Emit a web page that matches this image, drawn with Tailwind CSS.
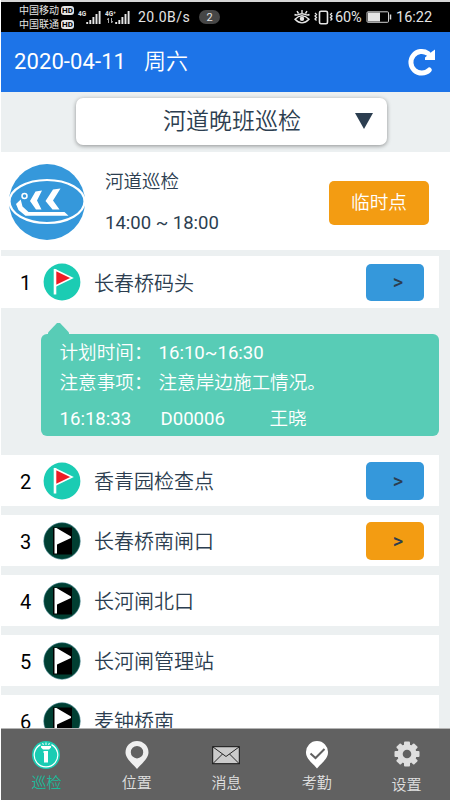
<!DOCTYPE html>
<html lang="zh-CN">
<head>
<meta charset="utf-8">
<title>河道巡检</title>
<script src="https://cdn.jsdelivr.net/npm/@tailwindcss/browser@4"></script>
</head>
<body class="w-[450px] h-[800px] overflow-hidden bg-white font-[Roboto,'Noto_Sans_CJK_SC',sans-serif] font-[350] text-[#2c3e50] whitespace-nowrap">
<svg class="hidden">
  <symbol id="flag-done" viewBox="0 0 38 38">
    <circle cx="19" cy="19" r="18.4" fill="#1bccb3"/>
    <path d="M12 6V31.500" stroke="#fff" stroke-width="2.600"/>
    <path d="M12.500 7L29 15L12.500 23Z" fill="#ee1c25" stroke="#fff" stroke-width="1.600"/>
  </symbol>
  <symbol id="flag-todo" viewBox="0 0 38 38">
    <circle cx="19" cy="19" r="18.2" fill="#003f32" stroke="#2c7480" stroke-width=".6"/>
    <rect x="10" y="5.500" width="19" height="27" fill="#000"/>
    <path d="M11.500 6H13.500L28 14.500L28 16L14 22.500V31.500H11.500Z" fill="#fff"/>
  </symbol>
  <symbol id="signal" viewBox="0 0 15 13">
    <path d="M1.200 13V11M4.300 13V9M7.400 13V6M10.500 13V3M13.600 13V0" stroke="#e6e6e6" stroke-width="1.900"/>
  </symbol>
</svg>
<div class="h-full pl-px flex flex-col">
  <div class="h-[2px] shrink-0 bg-[#d6d6d6]"></div>

  <div class="h-[30px] shrink-0 bg-black text-[#e4e4e4] flex items-center font-normal">
    <div class="ml-[18px] w-[56px] flex flex-col text-[10px] leading-[14px] pt-px">
      <div class="flex items-center gap-[2px]"><span>中国移动</span><span class="bg-[#e4e4e4] text-black font-bold text-[8px] leading-[9px] w-[13px] rounded-[3px] text-center">HD</span></div>
      <div class="flex items-center gap-[2px]"><span>中国联通</span><span class="bg-[#e4e4e4] text-black font-bold text-[8px] leading-[9px] w-[13px] rounded-[3px] text-center">HD</span></div>
    </div>
    <div class="ml-[3px] w-[23px] h-[15px] flex items-start"><span class="text-[6.500px] leading-[8px] font-bold w-[8px]">4G</span><svg class="w-[15px] h-[13px] mt-px"><use href="#signal"/></svg></div>
    <div class="ml-[4px] w-[25px] h-[15px] flex items-start"><span class="text-[6.500px] leading-[8px] font-bold w-[10px] flex flex-col"><span>4G⁺</span><svg class="w-[6px] h-[5px] ml-[2px]" viewBox="0 0 6 5"><path d="M1.500 5V0M0 2L1.500 0M4.500 0V5M6 3L4.500 5" stroke="#aaa" fill="none"/></svg></span><svg class="w-[15px] h-[13px] mt-px"><use href="#signal"/></svg></div>
    <span class="ml-[8px] w-[61px] text-[14px] tracking-[0.45px] pt-px">20.0B/s</span>
    <span class="w-[21px] h-[14px] rounded-full bg-[#464646] text-[11px] leading-[15px] text-center">2</span>
    <svg class="ml-[74px] w-[16px] h-[14px]" viewBox="0 0 16 14" fill="none" stroke="#e6e6e6" stroke-width="1.400"><path d="M.5 4.500C2.500 5.500 3.500 5 5 4.300Q8 3.200 11 4.300C12.500 5 13.500 5.500 15.500 4.500M8 3.500V0M4.500 3.500L3 1.200M11.500 3.500L13 1.200M1 9.200Q8 2.500 15 9.200Q8 16.500 1 9.200Z"/><circle cx="8" cy="8.800" r="2.200" fill="#e6e6e6" stroke="none"/></svg>
    <svg class="ml-[4px] w-[19px] h-[15px]" viewBox="0 0 19 15" fill="none" stroke="#e6e6e6" stroke-width="1.300"><rect x="5.500" y="1.200" width="8" height="12.500" rx="1.500" stroke-width="1.600"/><path d="M1 3L2.500 4.500L1 6L2.500 7.500L1 9L2.500 10.500M18 3L16.500 4.500L18 6L16.500 7.500L18 9L16.500 10.500"/></svg>
    <span class="ml-[2px] w-[31px] text-[14.500px] pt-px tracking-[-0.1px]">60%</span>
    <svg class="w-[26px] h-[12px]" viewBox="0 0 26 12"><rect x="1" y=".8" width="21.500" height="10.500" rx="1" fill="none" stroke="#cfcfcf" stroke-width="1"/><rect x="2" y="1.500" width="12" height="9" fill="#e4e4e4"/><path d="M24.500 3.500V8.500" stroke="#dcdcdc" stroke-width="1.500"/></svg>
    <span class="ml-[4px] text-[14.500px] pt-px">16:22</span>
  </div>

  <header class="h-[60px] shrink-0 bg-[#1d74e8] text-white flex items-center pl-[13px] pr-[14px] text-[22px] font-normal">
    <span class="w-[130px] tracking-[0.1px] -mt-[2px]">2020-04-11</span><span class="font-[350] -mt-[2px]">周六</span>
    <svg class="ml-auto w-[29px] h-[29px] -mt-[2px]" viewBox="0 0 29 29"><path d="M22.300 23A10.800 10.800 0 1 1 21 6.500" fill="none" stroke="#fff" stroke-width="5" stroke-linecap="round"/><path d="M28 2.500V13H18V10.500L24.500 5Z" fill="#fff"/></svg>
  </header>

  <main class="flex-1 min-h-0 overflow-hidden bg-[#ecf0f1] flex flex-col">
    <div class="h-[60px] shrink-0 pt-[6px] pl-[75px]">
      <div class="w-[311px] h-[47px] bg-white rounded-[7px] shadow-[0_1px_4px_rgba(0,0,0,0.4)] flex items-center pl-[87px] pr-[14px] text-[23px]">
        <span class="pt-[2px]">河道晚班巡检</span>
        <svg class="ml-auto w-[18px] h-[16px] -mt-[2px]" viewBox="0 0 18 16"><path d="M0 0H18L9 16Z" fill="#2c3e50"/></svg>
      </div>
    </div>

    <section class="h-[98px] shrink-0 bg-white flex items-center pl-[7px] pr-[21px]">
      <svg class="w-[78px] h-[78px] mt-[2px]" viewBox="0 0 78 78">
        <circle cx="39" cy="39" r="38" fill="#3598db"/>
        <ellipse cx="39" cy="38.500" rx="37.500" ry="21.500" fill="none" stroke="#fff" stroke-width="2.200"/>
        <circle cx="16.500" cy="33" r="2.500" fill="none" stroke="#fff" stroke-width="1.500"/>
        <path d="M12.700 36.500L8 41L10.500 47L17.500 52.700H60.500L56.500 49H20.500L14.500 43.500Z" fill="#fff"/>
        <path d="M27.500 28.500L34 27.500L29 37.500L33.500 46.500H28L22 38Z M45 26.500L52.500 25.500L45 37.500L51.500 46.500H44.500L37.500 38Z" fill="#fff"/>
      </svg>
      <div class="ml-[19px] mt-[3px] flex flex-col text-[18.500px] leading-[41px]"><span>河道巡检</span><span class="font-normal">14:00 ~ 18:00</span></div>
      <button class="ml-auto w-[100px] h-[44px] mt-[4px] rounded-[5px] bg-[#f39c12] text-white text-[18.700px] font-[350]">临时点</button>
    </section>

    <div class="mt-[6px] mr-[11px] h-[52px] shrink-0 bg-white flex items-center pl-[19px] pr-[15px] text-[20px]">
      <span class="w-[23px] pt-[2px] font-normal text-black">1</span><svg class="w-[38px] h-[38px]"><use href="#flag-done"/></svg><span class="ml-[13px] pt-[3px]">长春桥码头</span>
      <button class="ml-auto w-[58px] h-[37px] rounded-[5px] bg-[#3598db] font-medium pl-[6px]">&gt;</button>
    </div>

    <div class="mt-[15px] ml-[40px] mr-[11px] shrink-0">
      <svg class="block ml-[7px] w-[21px] h-[11px]" viewBox="0 0 21 11"><path d="M0 11V9.500L9 0H12L21 9.500V11Z" fill="#58ccb6"/></svg>
      <div class="h-[102px] rounded-[6px] bg-[#58ccb6] text-white text-[18.600px] leading-[30px] pl-[18.500px] pt-[4px]">
        <div class="flex"><span class="w-[99px]">计划时间：</span><span class="font-normal">16:10~16:30</span></div>
        <div class="flex"><span class="w-[99px]">注意事项：</span><span>注意岸边施工情况。</span></div>
        <div class="flex mt-[6px]"><span class="w-[101px] font-normal">16:18:33</span><span class="w-[109px] font-normal">D00006</span><span>王晓</span></div>
      </div>
    </div>

    <div class="mt-[19px] mr-[11px] flex flex-col gap-[9px] text-[20px]">
      <div class="h-[51px] shrink-0 bg-white flex items-center pl-[19px] pr-[15px]">
        <span class="w-[23px] pt-[2px] font-normal text-black">2</span><svg class="w-[38px] h-[38px]"><use href="#flag-done"/></svg><span class="ml-[13px] pt-[3px]">香青园检查点</span>
        <button class="ml-auto w-[58px] h-[38px] rounded-[5px] bg-[#3598db] font-medium pl-[6px]">&gt;</button>
      </div>
      <div class="h-[51px] shrink-0 bg-white flex items-center pl-[19px] pr-[15px]">
        <span class="w-[23px] pt-[2px] font-normal text-black">3</span><svg class="w-[38px] h-[38px]"><use href="#flag-todo"/></svg><span class="ml-[13px] pt-[3px]">长春桥南闸口</span>
        <button class="ml-auto w-[58px] h-[38px] rounded-[5px] bg-[#f39c12] font-medium pl-[6px]">&gt;</button>
      </div>
      <div class="h-[51px] shrink-0 bg-white flex items-center pl-[19px]">
        <span class="w-[23px] pt-[2px] font-normal text-black">4</span><svg class="w-[38px] h-[38px]"><use href="#flag-todo"/></svg><span class="ml-[13px] pt-[3px]">长河闸北口</span>
      </div>
      <div class="h-[51px] shrink-0 bg-white flex items-center pl-[19px]">
        <span class="w-[23px] pt-[2px] font-normal text-black">5</span><svg class="w-[38px] h-[38px]"><use href="#flag-todo"/></svg><span class="ml-[13px] pt-[3px]">长河闸管理站</span>
      </div>
      <div class="h-[51px] shrink-0 bg-white flex items-center pl-[19px]">
        <span class="w-[23px] pt-[2px] font-normal text-black">6</span><svg class="w-[38px] h-[38px]"><use href="#flag-todo"/></svg><span class="ml-[13px] pt-[3px]">麦钟桥南</span>
      </div>
    </div>
  </main>

  <nav class="h-[72px] shrink-0 bg-[#616161] border-t border-[#b4b4b4] grid grid-cols-5 text-[15px] leading-[20px] text-[#e0e0e0]">
    <div class="flex flex-col items-center gap-[4px] pt-[12px] pl-px text-[#1abc9c]">
      <svg class="w-[28px] h-[28px]" viewBox="0 0 28 28"><circle cx="14" cy="14" r="14" fill="#1bccb3"/><path d="M8.500 3.600A11.800 11.800 0 1 0 19.500 3.600" fill="none" stroke="#fff" stroke-width="1.200"/><path d="M9 5H19V6.500L17 8.500H11L9 6.500Z M11.500 10H16V21.500H12V12H11.500Z M13.500 1.500H14.500V4H13.500Z M10 2.500L11 2L12 3.500L11 4Z M18 2.500L17 2L16 3.500L17 4Z" fill="#fff"/></svg>
      <span>巡检</span>
    </div>
    <div class="flex flex-col items-center gap-[4px] pt-[12px] pl-[2px]">
      <svg class="w-[24px] h-[28px]" viewBox="0 0 24 28"><path fill-rule="evenodd" d="M12 0A11.500 11.500 0 0 1 23.500 11.500C23.500 18 15 24 12 28C9 24 .5 18 .5 11.500A11.500 11.500 0 0 1 12 0ZM12 5A6.200 6.200 0 1 0 12 17.400A6.200 6.200 0 1 0 12 5Z" fill="#efefef"/></svg>
      <span>位置</span>
    </div>
    <div class="flex flex-col items-center gap-[4px] pt-[12px] pl-[2px]">
      <svg class="w-[28px] h-[28px]" viewBox="0 0 28 28"><rect x=".7" y="5.700" width="26.600" height="17" fill="#cbcbcb" stroke="#151515" stroke-width="1"/><path d="M1 6L14 15.500L27 6M1 22.500L10.500 13M27 22.500L17.500 13" fill="none" stroke="#151515" stroke-width=".9"/></svg>
      <span>消息</span>
    </div>
    <div class="flex flex-col items-center gap-[4px] pt-[12px] pl-[3px]">
      <svg class="w-[24px] h-[28px]" viewBox="0 0 24 28"><path d="M12 0A11 11 0 0 1 23 11.500C23 18 15.500 23 12 27.500C8.500 23 1 18 1 11.500A11 11 0 0 1 12 0Z" fill="#fff"/><path d="M5.500 12.500L10.500 17L19.500 8" fill="none" stroke="#616161" stroke-width="2"/></svg>
      <span>考勤</span>
    </div>
    <div class="flex flex-col items-center gap-[4px] pt-[12px] pl-[3px]">
      <svg class="w-[26px] h-[26px] mb-[4px]" viewBox="-13 -13 26 26"><g fill="#dedede"><g id="teeth"><rect x="-3" y="-12.500" width="6" height="25" rx="1"/><rect x="-12.500" y="-3" width="25" height="6" rx="1"/></g><use href="#teeth" transform="rotate(45)"/><circle r="9.700"/></g><circle r="4.300" fill="#616161"/></svg>
      <span>设置</span>
    </div>
  </nav>
</div>
</body>
</html>
